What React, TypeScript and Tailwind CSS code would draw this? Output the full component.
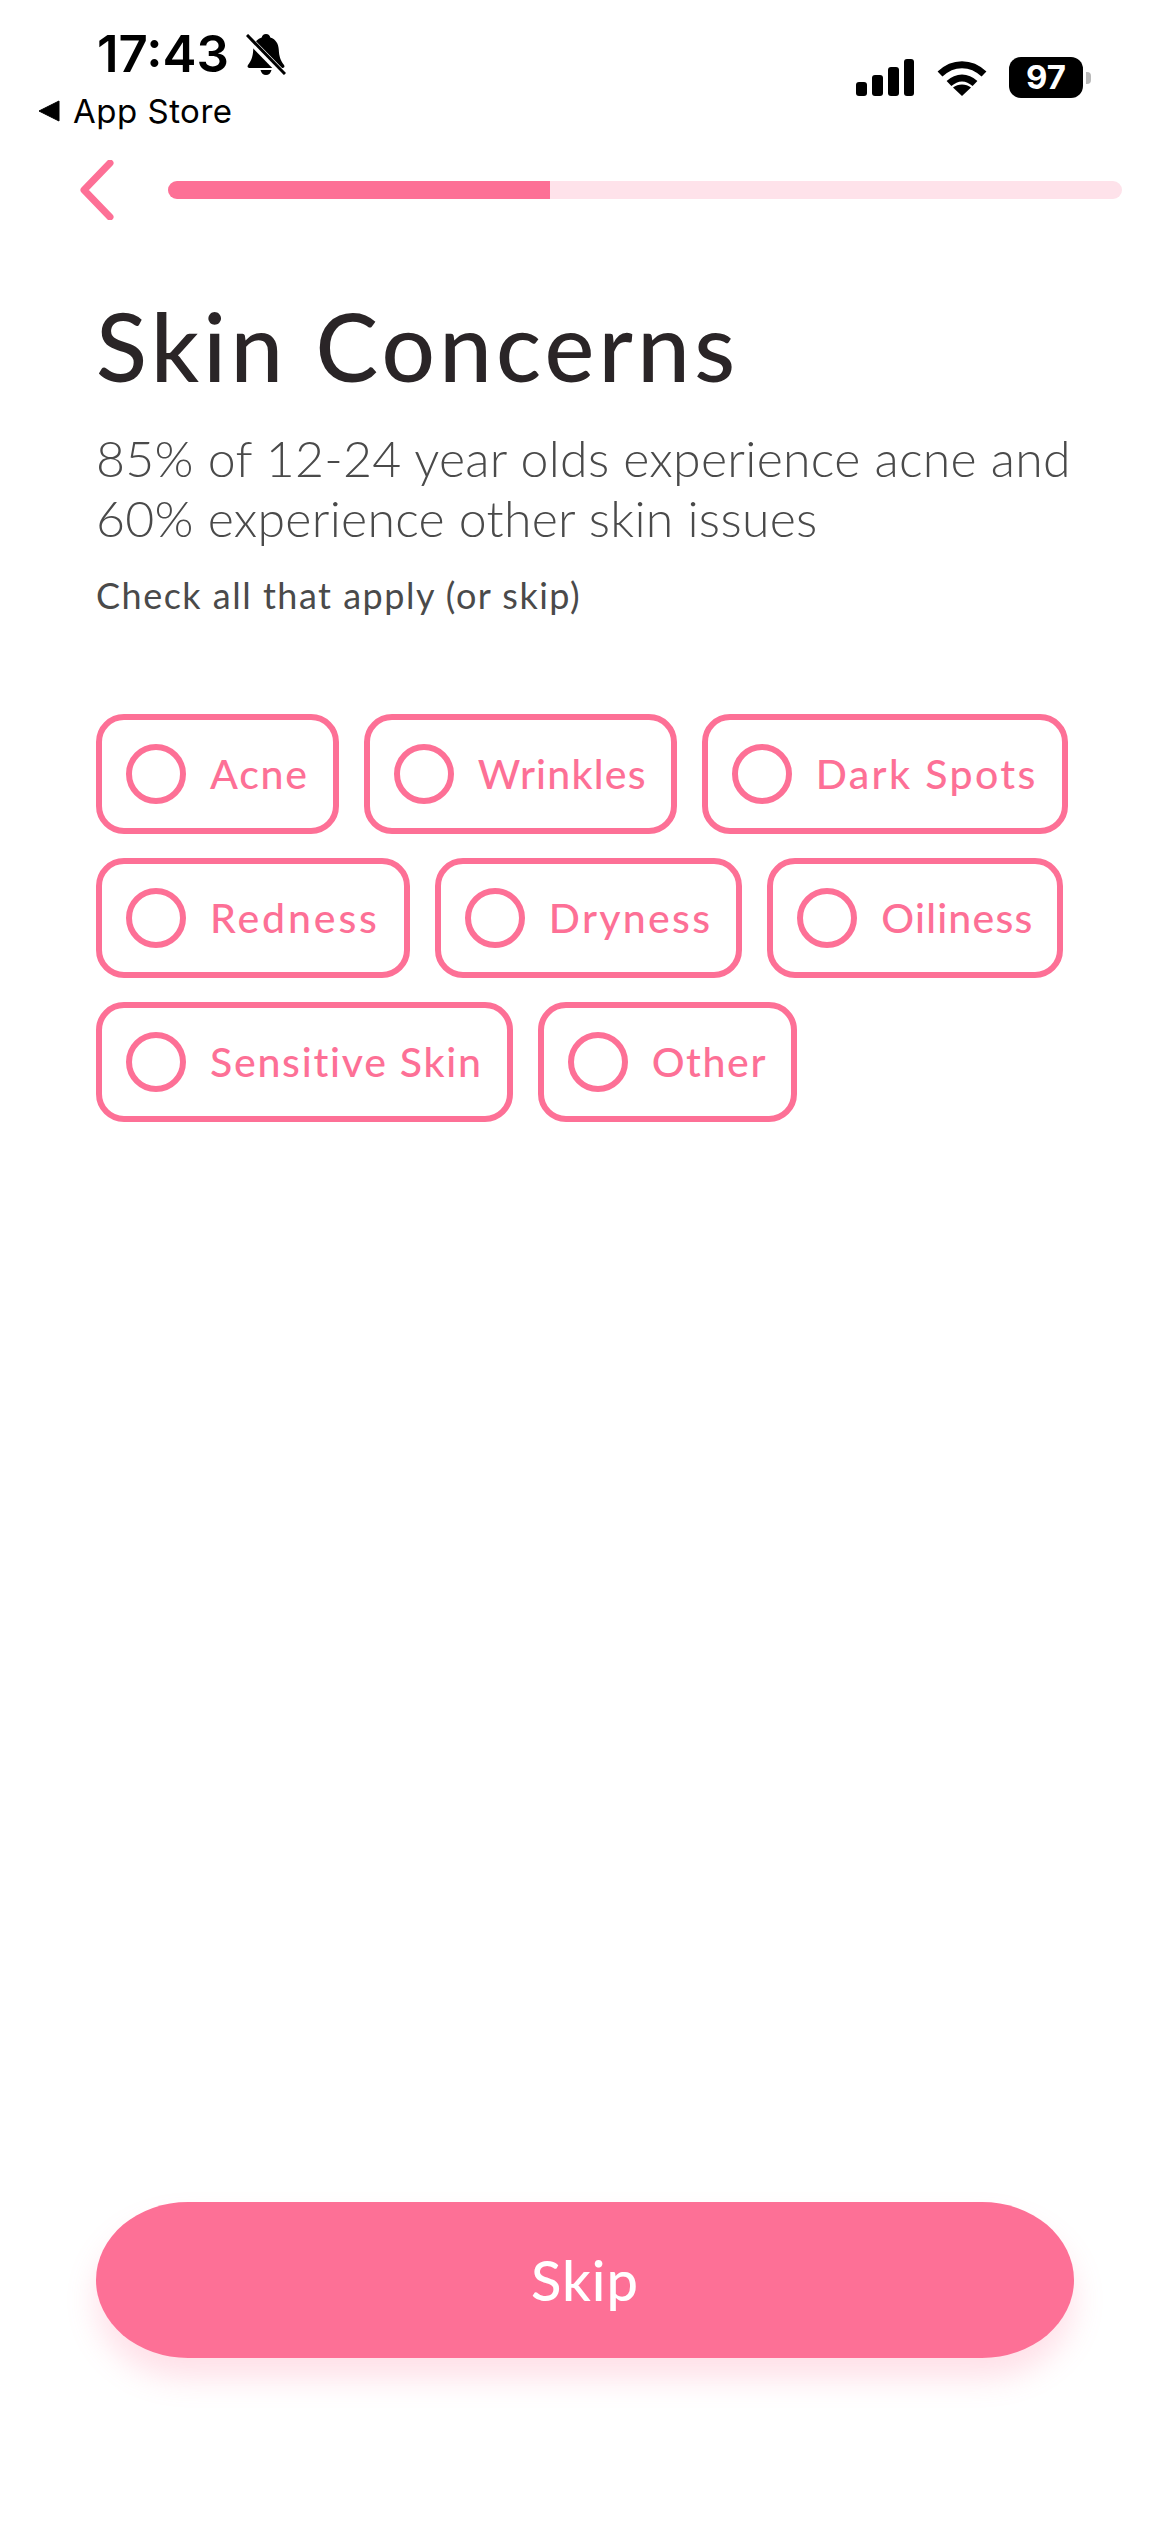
const PINK = "#fd7096";

const concerns = [
  [
    { label: "Acne", track: "tracking-[1.8px]" },
    { label: "Wrinkles", track: "tracking-[1.2px]" },
    { label: "Dark Spots", track: "tracking-[2.4px]" },
  ],
  [
    { label: "Redness", track: "tracking-[2.9px]" },
    { label: "Dryness", track: "tracking-[2.3px]" },
    { label: "Oiliness", track: "tracking-[1.2px]" },
  ],
  [
    { label: "Sensitive Skin", track: "tracking-[1.75px]" },
    { label: "Other", track: "tracking-[1.6px]" },
  ],
];

function StatusBar() {
  return (
    <div className="flex justify-between h-[160px] font-['Inter',sans-serif] text-black">
      <div className="pl-[38px] pt-[29px]">
        <div className="flex items-center pl-[59px] h-[50px]">
          <span className="text-[51px] leading-[50px] font-semibold">17:43</span>
          <svg viewBox="0 0 40 41" className="w-[40px] h-[41px] ml-[17px]">
            <path d="M20 0c2.500 0 4 1.700 4.300 3.600C30 5.400 32.500 10 32.800 16c.3 6 1.500 10 5.200 15 1 1.500.3 3-1.500 3H3.500C1.700 34 1 32.500 2 31c3.700-5 4.900-9 5.200-15C7.500 10 10 5.400 15.700 3.600 16 1.700 17.500 0 20 0z" fill="#000" />
            <path d="M14.500 36h11c-.6 3-2.800 5-5.500 5s-4.900-2-5.500-5z" fill="#000" />
            <path d="M1 3l36 37" stroke="#fff" strokeWidth="7" />
            <path d="M1 1l38 39" stroke="#000" strokeWidth="3" />
          </svg>
        </div>
        <div className="flex items-center mt-[12px] h-[40px]">
          <svg viewBox="0 0 22 22" className="w-[22px] h-[22px]">
            <path d="M21 1v20L1 11z" fill="#000" stroke="#000" strokeLinejoin="round" />
          </svg>
          <span className="ml-[13px] text-[33px] leading-[40px] font-normal tracking-[0.5px]">App Store</span>
        </div>
      </div>
      <div className="flex items-start pt-[57px] pr-[79px]">
        <div className="flex items-end gap-[5px] h-[37px] mt-[2px]">
          <div className="w-[11px] h-[14px] rounded-[3px] bg-black" />
          <div className="w-[11px] h-[21px] rounded-[3px] bg-black" />
          <div className="w-[11px] h-[29px] rounded-[3px] bg-black" />
          <div className="w-[10px] h-[37px] rounded-[3px] bg-black" />
        </div>
        <svg viewBox="0 0 50 37" className="w-[50px] h-[37px] ml-[23px] mt-[2px]">
          <path d="M3 15C16 2.500 34 2.500 47 15" fill="none" stroke="#000" strokeWidth="7" />
          <path d="M12 24.500C20 17 30 17 38 24.500" fill="none" stroke="#000" strokeWidth="7" />
          <path d="M25 37L16 28.500C21 24.500 29 24.500 34 28.500z" fill="#000" />
        </svg>
        <div className="flex items-center ml-[22px]">
          <div className="w-[74px] h-[41px] rounded-[12px] bg-black text-white flex items-center justify-center text-[33px] font-bold">97</div>
          <div className="w-[5px] h-[12px] ml-[3px] rounded-r-[4px] bg-[#b9b9b9]" />
        </div>
      </div>
    </div>
  );
}

function NavRow() {
  return (
    <div className="flex items-center h-[60px] pl-[78px] pr-[48px]">
      <svg viewBox="0 0 36 60" className="w-[36px] h-[60px]">
        <path d="M32 3L6 30l26 27" fill="none" stroke={PINK} strokeWidth="7" strokeLinecap="round" strokeLinejoin="round" />
      </svg>
      <div className="ml-[54px] flex-1 h-[18px] rounded-full bg-[#fee2ea] overflow-hidden">
        <div className="w-[382px] h-full bg-[#fd7096]" />
      </div>
    </div>
  );
}

function Pill({ label, track }: { label: string; track: string }) {
  return (
    <div className="flex items-center h-[120px] border-[6px] border-[#fd7096] rounded-[28px] pl-[24px] pr-[24px]">
      <div className="w-[60px] h-[60px] rounded-full border-[6px] border-[#fd7096]" />
      <span className={`ml-[24px] text-[41px] font-medium text-[#fd7096] ${track}`}>{label}</span>
    </div>
  );
}

export default function App() {
  return (
    <div className="flex flex-col w-[1170px] h-[2532px] bg-white font-['Lato',sans-serif] overflow-hidden">
      <StatusBar />
      <NavRow />
      <div className="pl-[96px] pr-[90px]">
        <h1 className="mt-[71px] text-[94px] leading-[110px] font-medium tracking-[4.3px] text-[#2a2527]">Skin Concerns</h1>
        <p className="mt-[27px] text-[50px] leading-[60px] font-light tracking-[0.28px] text-[#4a4a4a]">85% of 12-24 year olds experience acne and 60% experience other skin issues</p>
        <p className="mt-[25px] text-[36px] leading-[44px] font-normal tracking-[1.5px] text-[#4a4a4a]">Check all that apply (or skip)</p>
      </div>
      <div className="flex flex-col gap-[24px] pl-[96px] mt-[97px]">
        {concerns.map((row) => (
          <div key={row[0].label} className="flex gap-[25px]">
            {row.map((c) => (
              <Pill key={c.label} label={c.label} track={c.track} />
            ))}
          </div>
        ))}
      </div>
      <div className="mt-auto mb-[174px] mx-[96px] h-[156px] rounded-[92px/78px] bg-[#fd7096] shadow-[0_20px_30px_rgba(253,112,150,0.22)] flex items-center justify-center text-white text-[56px] font-medium tracking-[1px]">
        Skip
      </div>
    </div>
  );
}
